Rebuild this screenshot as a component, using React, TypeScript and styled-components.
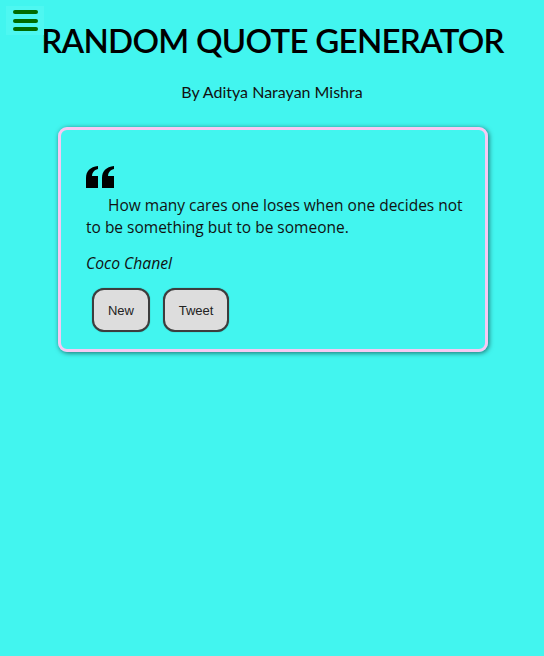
import React from "react";
import styled, { createGlobalStyle } from "styled-components";

const Global = createGlobalStyle`
  html, body { margin: 0; padding: 0; background: #42f5ef; }
  body { font-family: Lato, sans-serif; min-height: 656px; }
`;

const Page = styled.div`
  position: relative;
  padding-top: 18px;
  display: flex;
  flex-direction: column;
  align-items: center;
`;

const MenuButton = styled.div`
  position: absolute;
  left: 6px;
  top: 6px;
  width: 38px;
  height: 29px;
  background: #4ef7f1;
  display: flex;
  flex-direction: column;
  align-items: center;
  justify-content: center;
  gap: 4.5px;
`;

const Bar = styled.span`
  display: block;
  width: 25px;
  height: 4px;
  border-radius: 2px;
  background: #006b00;
`;

const Title = styled.h1`
  margin: 0;
  font-family: "Lato Semibold", Lato, sans-serif;
  font-weight: 600;
  font-size: 33px;
  letter-spacing: -0.7px;
  line-height: 44px;
  color: #000;
  margin-left: 1px;
`;

const Author = styled.p`
  margin: 20px 0 0;
  font-family: Lato, sans-serif;
  font-size: 16px;
  line-height: 20px;
  color: #111;
`;

const Card = styled.div`
  box-sizing: border-box;
  margin-top: 25px;
  width: 430px;
  height: 225px;
  border: 3px solid #f7c9f3;
  border-radius: 9px;
  box-shadow: 1px 1px 5px rgba(0, 0, 0, 0.55);
  padding: 36px 22px 0 25px;
  margin-left: 2px;
`;

const QuoteIcon = styled.svg`
  display: block;
  width: 29px;
  height: 22px;
`;

const QuoteText = styled.p`
  margin: 6px 0 0;
  font-family: "Open Sans", sans-serif;
  font-size: 15.5px;
  line-height: 22px;
  font-weight: 500;
  color: #111;
  text-indent: 22px;
`;

const Person = styled.p`
  margin: 14px 0 0;
  font-family: "Open Sans", sans-serif;
  font-style: italic;
  font-size: 15.7px;
  line-height: 22px;
  color: #111;
`;

const Buttons = styled.div`
  display: flex;
  gap: 13px;
  margin-top: 14px;
  margin-left: 6px;
`;

const Btn = styled.button<{ $w: number }>`
  width: ${(p) => p.$w}px;
  height: 44px;
  background: #dddddd;
  border: 2px solid #3d3d3d;
  border-radius: 12px;
  font-family: Arial, "Liberation Sans", sans-serif;
  font-size: 13px;
  color: #222;
  padding: 0;
  box-shadow: 0 0 1px rgba(0,0,0,0.5);
`;

export default function App() {
  return (
    <>
      <Global />
      <Page>
        <MenuButton>
          <Bar />
          <Bar />
          <Bar />
        </MenuButton>
        <Title>RANDOM QUOTE GENERATOR</Title>
        <Author>By Aditya Narayan Mishra</Author>
        <Card>
          <QuoteIcon viewBox="0 0 29 22">
            <path
              fill="#000"
              d="M0 22V12C0 5 4 1 12 0V3C8 4 6 7 6 10H12V22ZM16 22V12C16 5 20 1 28 0V3C24 4 22 7 22 10H28V22Z"
            />
          </QuoteIcon>
          <QuoteText>
            How many cares one loses when one decides not to be something but to be someone.
          </QuoteText>
          <Person>Coco Chanel</Person>
          <Buttons>
            <Btn $w={58}>New</Btn>
            <Btn $w={66}>Tweet</Btn>
          </Buttons>
        </Card>
      </Page>
    </>
  );
}
